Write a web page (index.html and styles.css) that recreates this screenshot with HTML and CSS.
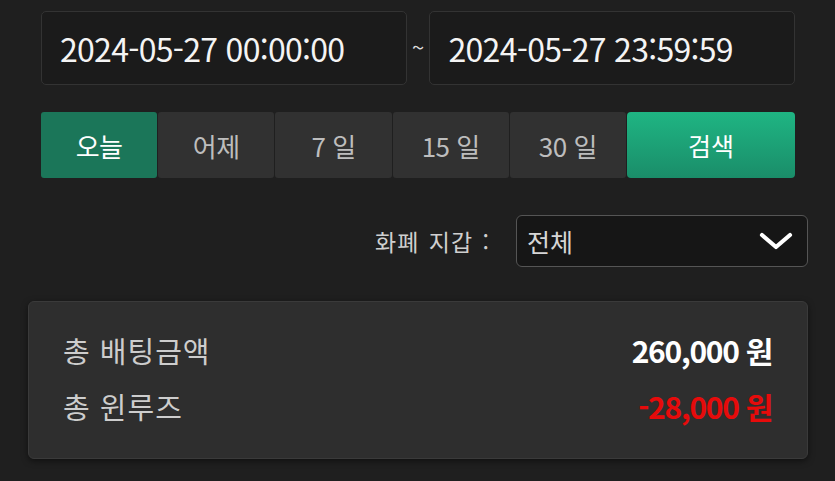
FILE: index.html
```html
<!DOCTYPE html>
<html lang="ko">
<head>
<meta charset="utf-8">
<link rel="stylesheet" href="styles.css">
</head>
<body>
<div class="page">
  <div class="dates">
    <div class="date-box">2024-05-27 00:00:00</div>
    <span class="tilde">~</span>
    <div class="date-box">2024-05-27 23:59:59</div>
  </div>
  <div class="periods">
    <button class="period active">오늘</button>
    <button class="period">어제</button>
    <button class="period">7 일</button>
    <button class="period">15 일</button>
    <button class="period">30 일</button>
    <button class="search">검색</button>
  </div>
  <div class="wallet">
    <span class="wallet-label">화폐 지갑 :</span>
    <div class="select">
      <span>전체</span>
      <svg class="chev" width="34" height="18" viewBox="0 0 34 18"><path d="M3 3 L17 15 L31 3" fill="none" stroke="#fff" stroke-width="4.2" stroke-linecap="round" stroke-linejoin="round"/></svg>
    </div>
  </div>
  <div class="summary">
    <div class="row"><span class="label">총 배팅금액</span><span class="value">260,000 원</span></div>
    <div class="row"><span class="label">총 윈루즈</span><span class="value neg">-28,000 원</span></div>
  </div>
</div>
</body>
</html>
```
FILE: styles.css
```css
html, body {
  margin: 0;
  padding: 0;
  background: #1f1f1f;
}
body {
  font-family: "Noto Sans CJK KR", "Noto Sans", sans-serif;
  color: #fff;
  width: 835px;
  height: 481px;
  overflow: hidden;
}
.page {
  padding: 11px 27px 0 28px;
}
.dates {
  display: flex;
  align-items: center;
  padding: 0 13px;
}
.date-box {
  width: 366px;
  height: 74px;
  box-sizing: border-box;
  border: 1px solid #333;
  border-radius: 5px;
  background: #1b1b1b;
  display: flex;
  align-items: center;
  padding-left: 18px;
  font-size: 32px;
  letter-spacing: -0.7px;
  color: #f4f4f4;
}
.tilde {
  width: 23px;
  text-align: center;
  font-size: 22px;
  color: #ddd;
  margin-top: -4px;
}
.periods {
  margin: 27px 13px 0;
  display: grid;
  grid-template-columns: repeat(5, 1fr) 168px;
  gap: 1px;
  height: 66px;
}
.period {
  border: none;
  background: #313131;
  color: #bdbdbd;
  font-family: inherit;
  font-size: 26px;
  letter-spacing: -0.5px;
  padding: 0;
  border-radius: 3px;
}
.period.active {
  background: #1b7659;
  color: #fff;
}
.search {
  border: none;
  border-radius: 4px;
  background: linear-gradient(#1fb583, #1a8d69);
  color: #fff;
  font-family: inherit;
  font-size: 25px;
  padding: 0;
}
.wallet {
  margin-top: 37px;
  display: flex;
  justify-content: flex-end;
  align-items: center;
  gap: 26px;
}
.wallet-label {
  font-size: 23px;
  letter-spacing: 1px;
  word-spacing: 2px;
  color: #cfcfcf;
}
.select {
  width: 292px;
  height: 52px;
  box-sizing: border-box;
  border: 1px solid #555;
  border-radius: 6px;
  background: #161616;
  display: flex;
  align-items: center;
  justify-content: space-between;
  padding: 0 14px 0 10px;
  font-size: 25px;
  color: #d6d6d6;
}
.summary {
  margin-top: 34px;
  height: 158px;
  box-sizing: border-box;
  background: #2e2e2e;
  border: 1px solid #3a3a3a;
  border-radius: 6px;
  box-shadow: 0 2px 6px rgba(0,0,0,0.5);
  padding: 29px 35px 0 34px;
  display: flex;
  flex-direction: column;
  gap: 18px;
}
.row {
  display: flex;
  justify-content: space-between;
  align-items: center;
  height: 38px;
}
.label {
  font-size: 29px;
  letter-spacing: 1px;
  color: #cdcdcd;
}
.value {
  font-size: 30px;
  font-weight: bold;
  letter-spacing: -1.3px;
  color: #fff;
}
.value.neg {
  color: #e60b0b;
}
```
